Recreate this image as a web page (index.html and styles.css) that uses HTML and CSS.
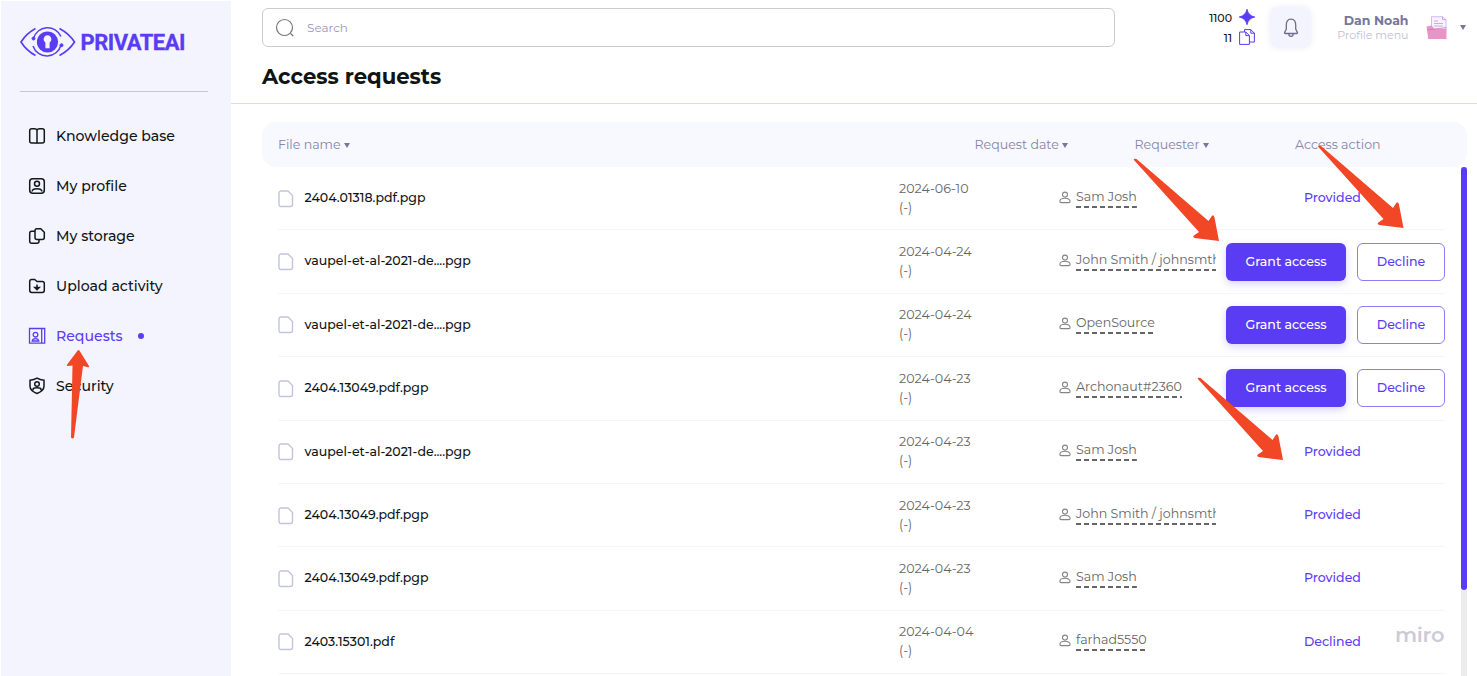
FILE: index.html
```html
<!DOCTYPE html>
<html lang="en">
<head>
<meta charset="utf-8">
<title>Access requests</title>
<link rel="stylesheet" href="styles.css">
</head>
<body>
<svg class="defs" width="0" height="0" aria-hidden="true">
  <symbol id="file" viewBox="0 0 16 18"><path d="M3.500 1H10l4.500 4.500v9A2 2 0 0 1 12.500 16.500h-9.500A2 2 0 0 1 1 14.500V3.200A2.200 2.200 0 0 1 3.500 1z" fill="none" stroke="#c3c3df" stroke-width="1.400"/></symbol>
  <symbol id="user" viewBox="0 0 12 13"><g fill="none" stroke="#858585" stroke-width="1.100"><circle cx="6" cy="3.600" r="2.500"/><path d="M.9 10.300c0-4 10.200-4 10.200 0 0 .9-.4 1.300-1.200 1.300H2.100c-.8 0-1.200-.4-1.200-1.300z"/></g></symbol>
  <symbol id="arrow" viewBox="0 0 86 84"><path d="M0 1Q1-.5 3 .5L75 62.500 78.500 57.200Q80 56 81 59L85.500 82.500 61 79.500Q58.500 78 61 76.500L65.500 73.500z" fill="#f24726"/></symbol>
</svg>
<div class="app">
  <aside class="sidebar">
    <div class="brand">
      <svg width="56" height="32" viewBox="0 0 56 32" fill="none" stroke="#5b3cf5" stroke-width="1.700">
        <path d="M15.500 2.500C9 6 4.500 10.500 1 16c3.500 5.500 8 10 14.500 13.500M39.500 2.500C46 6 51 10.500 54.500 16 51 21.500 46 26 39.500 29.500"/>
        <path d="M13.500 12.500A14.600 14.600 0 0 1 41 10.500M13 20A14.600 14.600 0 0 0 41 19" stroke-width="1.500"/>
        <circle cx="27.500" cy="16" r="10.600" fill="#5b3cf5" stroke="none"/>
        <circle cx="13.500" cy="12.500" r="1.500" fill="#5b3cf5" stroke-width="1"/><circle cx="41.500" cy="19.200" r="1.500" fill="#5b3cf5" stroke-width="1"/>
        <path d="M25.400 22.300v-5.800a3.900 3.900 0 1 1 4.200 0v5.800z" fill="#f4f4ff" stroke="none"/>
      </svg>
      <span class="brand-name">PRIVATEAI</span>
    </div>
    <nav class="menu">
      <a class="item"><svg class="ico" viewBox="0 0 18 18"><path d="M9 3v13M3.700 1.700h2.600Q9 1.700 9 3.500q0-1.800 2.700-1.800h2.600q2 0 2 2v10.600q0 1.700-2 1.700H11Q9 16 9 16.800 9 16 7 16H3.700q-2 0-2-1.700V3.700q0-2 2-2z"/></svg><span>Knowledge base</span></a>
      <a class="item"><svg class="ico" viewBox="0 0 18 18"><rect x="1.700" y="1.700" width="14.600" height="14.600" rx="3"/><circle cx="9" cy="6.800" r="2.500"/><path d="M4 14.500c.5-3.700 9.500-3.700 10 0"/></svg><span>My profile</span></a>
      <a class="item"><svg class="ico" viewBox="0 0 18 18"><path d="M9 1.700h3.700l3.600 3.600v5.200q0 2-2 2H9q-2 0-2-2V3.700q0-2 2-2zM6.800 4.200H3.700q-2 0-2 2v8.100q0 2 2 2H9q2 0 2-2v-1.800"/></svg><span>My storage</span></a>
      <a class="item"><svg class="ico" viewBox="0 0 18 18"><path d="M3.700 2.500h3l2.300 2h5.300q2 0 2 2v6.800q0 2.200-2 2.200H3.700q-2 0-2-2.200V4.500q0-2 2-2zM9 7.500v5M6.800 10.500 9 12.700l2.200-2.200z"/></svg><span>Upload activity</span></a>
      <a class="item active"><svg class="ico" viewBox="0 0 18 18"><path d="M1.500 1.500h15.200v14.700H1.500zM13.700 1.500v14.700"/><circle cx="7.500" cy="7.700" r="2.300"/><path d="M4.200 14c.5-3.300 6.100-3.300 6.600 0z"/></svg><span>Requests</span><i class="dot"></i></a>
      <a class="item"><svg class="ico" viewBox="0 0 18 18"><path d="M9 1.200Q12 3 16 3.200V9q0 4.800-7 7.500Q2 13.800 2 9V3.200Q6 3 9 1.200z"/><circle cx="9" cy="7" r="2.300"/><path d="M5 13.300v-.8c0-2.200 8-2.200 8 0v.8"/></svg><span>Security</span></a>
    </nav>
  </aside>
  <main class="main">
    <header class="top">
      <div class="topbar">
        <div class="search"><svg width="20" height="20" viewBox="0 0 20 20" fill="none" stroke="#777" stroke-width="1.200"><circle cx="9.500" cy="9.500" r="8"/><path d="m15.500 15.500 2.700 2.500"/></svg><span>Search</span></div>
        <div class="counts">
          <div class="count"><span>1100</span><svg width="16" height="16" viewBox="0 0 16 16"><path d="M8 .3Q9.300 6.700 15.700 8 9.300 9.300 8 15.700 6.700 9.300.3 8 6.700 6.700 8 .3z" fill="#5b3cf5" stroke="#5b3cf5" stroke-linejoin="round" stroke-width=".9"/></svg></div>
          <div class="count"><span>11</span><svg width="16" height="16" viewBox="0 0 16 16" fill="none" stroke="#5b3cf5" stroke-width="1"><path d="M.6 3h6.200l3.600 3.600v8.800H.6zM6.800 3v3.600h3.600M5.500 3V.6h6.300l3.600 3.600V13h-5M11.800.6v3.600h3.600"/></svg></div>
        </div>
        <div class="bell"><svg width="16" height="20" viewBox="0 0 16 20" fill="none" stroke="#6d6c8c" stroke-width="1.300"><path d="M8 1.200C4.500 1.200 3.300 4 3.300 7v4L1.600 14.500q-.3 1 .8 1h11.200q1.100 0 .8-1L12.700 11V7c0-3-1.200-5.800-4.700-5.800zM5.800 16q0 2.400 2.200 2.400t2.200-2.400"/></svg></div>
        <div class="who"><b>Dan Noah</b><span>Profile menu</span></div>
        <svg class="avatar" width="22" height="24" viewBox="0 0 22 24"><path d="M5.500.7h11l3.500 3V14h-14.500z" fill="#f8f3ff" stroke="#cfa8f5" stroke-width=".8"/><path d="M16.500.7v3h3.500M8 5h4M8 7.500h9M8 10h9" fill="none" stroke="#b99ae6" stroke-width=".8"/><path d="M.5 10.500l5.200-1 2.500 3.200H20.500V23H2.300z" fill="#e695c6"/><path d="M1.300 14 20.500 11.500" stroke="#d26fb0" stroke-width=".7"/></svg>
        <i class="caret"></i>
      </div>
      <h1>Access requests</h1>
    </header>
    <section class="table">
      <div class="thead">
        <span>File name<i class="caret"></i></span>
        <span>Request date<i class="caret"></i></span>
        <span>Requester<i class="caret"></i></span>
        <span>Access action</span>
      </div>
      <div class="body">
        <div class="rows">
          <div class="row"><div class="file"><svg><use href="#file"/></svg><span>2404.01318.pdf.pgp</span></div><div class="date">2024-06-10<br>(-)</div><div class="req"><svg><use href="#user"/></svg><span>Sam Josh</span></div><div class="act"><span class="state">Provided</span></div></div>
          <div class="row"><div class="file"><svg><use href="#file"/></svg><span>vaupel-et-al-2021-de....pgp</span></div><div class="date">2024-04-24<br>(-)</div><div class="req"><svg><use href="#user"/></svg><span>John Smith / johnsmth</span></div><div class="act"><button class="grant">Grant access</button><button class="decline">Decline</button></div></div>
          <div class="row"><div class="file"><svg><use href="#file"/></svg><span>vaupel-et-al-2021-de....pgp</span></div><div class="date">2024-04-24<br>(-)</div><div class="req"><svg><use href="#user"/></svg><span>OpenSource</span></div><div class="act"><button class="grant">Grant access</button><button class="decline">Decline</button></div></div>
          <div class="row"><div class="file"><svg><use href="#file"/></svg><span>2404.13049.pdf.pgp</span></div><div class="date">2024-04-23<br>(-)</div><div class="req"><svg><use href="#user"/></svg><span>Archonaut#2360</span></div><div class="act"><button class="grant">Grant access</button><button class="decline">Decline</button></div></div>
          <div class="row"><div class="file"><svg><use href="#file"/></svg><span>vaupel-et-al-2021-de....pgp</span></div><div class="date">2024-04-23<br>(-)</div><div class="req"><svg><use href="#user"/></svg><span>Sam Josh</span></div><div class="act"><span class="state">Provided</span></div></div>
          <div class="row"><div class="file"><svg><use href="#file"/></svg><span>2404.13049.pdf.pgp</span></div><div class="date">2024-04-23<br>(-)</div><div class="req"><svg><use href="#user"/></svg><span>John Smith / johnsmth</span></div><div class="act"><span class="state">Provided</span></div></div>
          <div class="row"><div class="file"><svg><use href="#file"/></svg><span>2404.13049.pdf.pgp</span></div><div class="date">2024-04-23<br>(-)</div><div class="req"><svg><use href="#user"/></svg><span>Sam Josh</span></div><div class="act"><span class="state">Provided</span></div></div>
          <div class="row"><div class="file"><svg><use href="#file"/></svg><span>2403.15301.pdf</span></div><div class="date">2024-04-04<br>(-)</div><div class="req"><svg><use href="#user"/></svg><span>farhad5550</span></div><div class="act"><span class="state">Declined</span></div></div>
        </div>
        <div class="track"><div class="thumb"></div></div>
      </div>
    </section>
  </main>
</div>
<div class="watermark">miro</div>
<svg class="notes" width="1477" height="676" viewBox="0 0 1477 676">
  <path d="M77.300 351Q78.500 349 79.700 351L89 366Q89.500 368 87 367L83 366 74 437.500Q72.500 439.500 71 437.500L72.500 365.500 68 366Q66 366 67.500 364z" fill="#f24726"/>
  <use href="#arrow" x="1133.500" y="158.500" width="86" height="84"/>
  <use href="#arrow" x="1318" y="145.500" width="86" height="84"/>
  <use href="#arrow" x="1197.500" y="377.500" width="86" height="84"/>
</svg>
</body>
</html>
```
FILE: styles.css
```css
* { box-sizing: border-box; }
body { margin: 0; width: 1477px; height: 676px; overflow: hidden; position: relative; background: #fff; font-family: Montserrat, Inter, "Open Sans", sans-serif; font-size: 12.6px; color: #0f1414; }
.defs { position: absolute; }
.app { display: flex; height: 676px; }
.sidebar { width: 230px; flex: none; margin: 1px 0 0 1px; background: #f4f4ff; padding: 25px 23px 0 19px; }
.brand { height: 66px; border-bottom: 1px solid #c6c5dd; display: flex; align-items: flex-start; gap: 4.5px; }
.brand svg { flex: none; }
.brand-name { font: 700 22px/32px Roboto, sans-serif; color: #5b3cf5; white-space: nowrap; letter-spacing: -.5px; -webkit-text-stroke: .3px #5b3cf5; padding-top: 1px; }
.menu { padding: 19px 0 0 8px; display: flex; flex-direction: column; }
.item { height: 50px; display: flex; align-items: center; gap: 10px; font-size: 14.1px; font-weight: 500; white-space: nowrap; }
.ico { width: 18px; height: 18px; fill: none; stroke: #111a1a; stroke-width: 1.5; flex: none; }
.active { color: #5b3cf5; }
.active .ico { stroke: #5b3cf5; stroke-width: 1.3; }
.dot { width: 6px; height: 6px; border-radius: 50%; background: #5b3cf5; margin-left: 5px; }
.main { flex: 1; min-width: 0; display: flex; flex-direction: column; }
.top { height: 104px; flex: none; border-bottom: 1px solid #dcdcec; padding: 8px 0 0 31px; }
.topbar { display: flex; height: 39px; align-items: center; }
.search { width: 853px; height: 39px; flex: none; border: 1px solid #ccc; border-radius: 6px; display: flex; align-items: center; gap: 12px; padding-left: 12px; color: #9b99b8; font-size: 12px; }
.search span { padding-bottom: 1px; }
.counts { width: 140px; display: flex; flex-direction: column; gap: 4px; padding-bottom: 2px; }
.count { display: flex; height: 16px; align-items: center; justify-content: flex-end; gap: 7px; font-size: 11px; font-weight: 500; }
.count span { padding-top: 2px; }
.bell { width: 41px; height: 41px; margin-left: 15px; border-radius: 8px; background: #f4f4ff; box-shadow: 0 0 7px #eeeef6; display: flex; align-items: center; justify-content: center; flex: none; }
.who { width: 97.5px; display: flex; flex-direction: column; text-align: right; font-size: 11px; line-height: 15px; color: #c0bfd0; white-space: nowrap; padding-top: 1px; }
.who b { color: #77769b; font-size: 12.5px; }
.avatar { margin-left: 17px; flex: none; }
.caret { display: inline-block; width: 0; height: 0; border: 3.5px solid transparent; border-top: 5.5px solid #77769b; border-bottom: 0; margin-left: 3.5px; }
.topbar .caret { margin-left: 12.5px; }
h1 { margin: 15px 0 0; font-size: 21.2px; line-height: 28px; font-weight: 700; }
.table { margin: 18px 10px 0 31px; flex: 1; min-height: 0; display: flex; flex-direction: column; }
.thead { height: 45px; flex: none; background: #f8f8ff; border-radius: 14px; display: grid; grid-template-columns: 696.5px 160px 160.5px 1fr; padding: 0 0 1px 16px; align-items: center; color: #8685a6; }
.thead .caret { vertical-align: 1px; }
.body { flex: 1; min-height: 0; display: flex; justify-content: space-between; }
.rows { width: 1183px; padding-left: 16px; overflow: hidden; }
.row { height: 63.38px; display: grid; grid-template-columns: 621px 160px 167px 1fr; align-items: center; border-bottom: 1px solid #f4f4fb; }
.file { display: flex; align-items: center; gap: 10.5px; font-weight: 500; font-size: 12.55px; }
.file span { padding-bottom: 1.2px; }
.file svg { width: 16px; height: 18px; position: relative; left: .4px; top: .5px; }
.date { line-height: 19px; color: #666; padding-bottom: 1px; font-size: 12.65px; }
.req { width: 157px; overflow: hidden; white-space: nowrap; display: flex; align-items: center; gap: 5px; color: #666; padding-bottom: 2px; }
.req svg { width: 12px; height: 13px; flex: none; }
.req span { line-height: 19px; padding-bottom: 2px; background: repeating-linear-gradient(90deg, #666 0 5px, transparent 5px 8px) bottom / 100% 2px no-repeat; }
.act { display: flex; align-items: center; gap: 11px; }
.state { margin-left: 78px; padding-bottom: 1.2px; color: #5b3cf5; font-weight: 500; font-size: 12.55px; }
button { font: 500 12.6px Montserrat, Inter, sans-serif; height: 38px; border-radius: 6px; padding: 0 0 1px; white-space: nowrap; }
.grant { width: 120px; border: 0; background: #5b3cf5; color: #fff; box-shadow: 0 3px 9px #d9d3fc; }
.decline { width: 88px; border: 1px solid #8f7bf7; background: #fff; color: #5b3cf5; }
.track { width: 6px; background: #ececec; }
.thumb { height: 423px; border-radius: 3px; background: #5b3cf5; }
.watermark { position: absolute; left: 1395px; top: 622px; font: 600 21px/26px Montserrat, Inter, sans-serif; letter-spacing: -.3px; color: #cccbd8; }
.notes { position: absolute; left: 0; top: 0; pointer-events: none; }
```
